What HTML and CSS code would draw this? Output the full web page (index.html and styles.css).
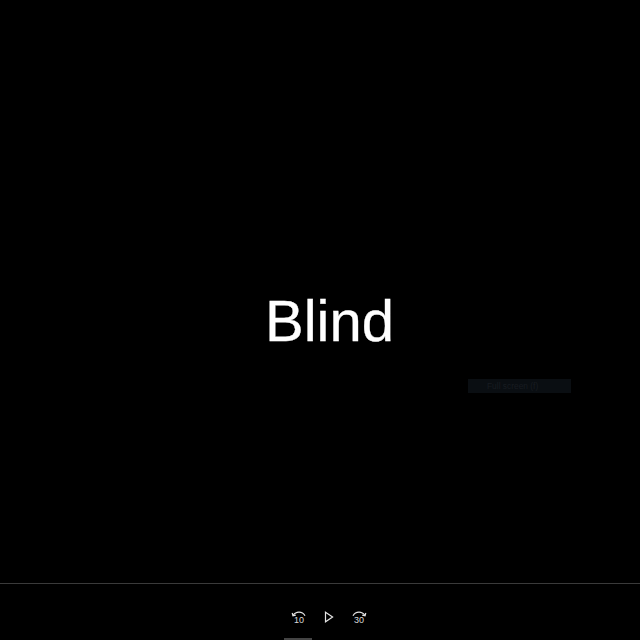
FILE: index.html
```html
<!DOCTYPE html>
<html lang="en">
<head>
<meta charset="utf-8">
<title>Blind</title>
<link rel="stylesheet" href="styles.css">
</head>
<body>
<div class="player">
  <main class="stage">
    <h1 class="title">Blind</h1>
    <div class="tip">Full screen (f)</div>
  </main>
  <footer class="bar">
    <div class="controls">
      <button class="ctl" aria-label="Back 10 seconds">
        <svg class="arc" viewBox="0 0 16 6" width="16" height="6"><path d="M2 4.6C3.6 2.2 5.8 1.2 8 1.2s4.6 1.1 6 3.6"/><path d="M1.2 2 2 4.8 4.8 4.2"/></svg>
        <span class="num">10</span>
      </button>
      <button class="ctl" aria-label="Play">
        <svg viewBox="0 0 10 12" width="10" height="12"><path d="M1.5 1.2 8.6 6 1.5 10.8Z"/></svg>
      </button>
      <button class="ctl" aria-label="Forward 30 seconds">
        <svg class="arc" viewBox="0 0 16 6" width="16" height="6"><path d="M14 4.6C12.4 2.2 10.2 1.2 8 1.2S3.4 2.3 2 4.8"/><path d="M14.8 2 14 4.8 11.2 4.2"/></svg>
        <span class="num">30</span>
      </button>
    </div>
    <div class="home"></div>
  </footer>
</div>
</body>
</html>
```
FILE: styles.css
```css
* { box-sizing: border-box; }
html, body { margin: 0; height: 100%; background: #000; }
.player { height: 640px; display: flex; flex-direction: column; font-family: "Liberation Sans", Arial, sans-serif; color: #fff; }
.stage { position: relative; flex: 1; display: flex; align-items: center; justify-content: center; padding: 58px 0 0 19px; }
.title { margin: 0; font-size: 58px; font-weight: 400; line-height: 1; -webkit-text-stroke: 0.3px #fff; }
.tip { position: absolute; left: 468px; top: 379px; width: 103px; height: 14px; padding-left: 19px; background: #0a0e12; color: #181c21; font-size: 8.4px; line-height: 14px; }
.bar { height: 57px; border-top: 1px solid #3a3a3a; display: flex; flex-direction: column; align-items: center; position: relative; }
.controls { display: flex; gap: 6px; margin-top: 21px; margin-left: 18px; }
.ctl { width: 24px; height: 24px; padding: 0; border: 0; background: none; color: #e4e4e4; display: flex; flex-direction: column; align-items: center; justify-content: center; }
.ctl svg { fill: none; stroke: currentColor; stroke-width: 1.2; }
.num { font: 9px/8px "Liberation Sans", Arial, sans-serif; color: #d8d8d8; margin-top: -1px; }
.home { position: absolute; bottom: 0; left: 284px; width: 28px; height: 2px; background: #444; }
```
